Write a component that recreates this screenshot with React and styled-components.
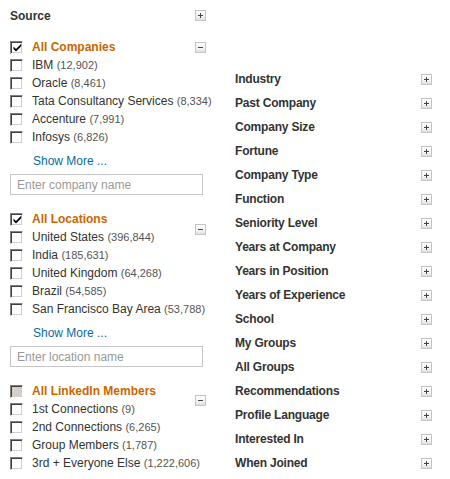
import styled, { createGlobalStyle } from 'styled-components';

const GlobalStyle = createGlobalStyle`
  body {
    margin: 0;
    background: #fff;
    font-family: "Liberation Sans", Arial, sans-serif;
    color: #333;
  }
`;

const groups = [
  {
    title: 'All Companies',
    drop: 4,
    options: [
      ['IBM', '12,902'],
      ['Oracle', '8,461'],
      ['Tata Consultancy Services', '8,334'],
      ['Accenture', '7,991'],
      ['Infosys', '6,826'],
    ],
    placeholder: 'Enter company name',
  },
  {
    title: 'All Locations',
    drop: 14,
    options: [
      ['United States', '396,844'],
      ['India', '185,631'],
      ['United Kingdom', '64,268'],
      ['Brazil', '54,585'],
      ['San Francisco Bay Area', '53,788'],
    ],
    placeholder: 'Enter location name',
  },
  {
    title: 'All LinkedIn Members',
    drop: 13,
    disabled: true,
    options: [
      ['1st Connections', '9'],
      ['2nd Connections', '6,265'],
      ['Group Members', '1,787'],
      ['3rd + Everyone Else', '1,222,606'],
    ],
  },
];

const facets = [
  'Industry',
  'Past Company',
  'Company Size',
  'Fortune',
  'Company Type',
  'Function',
  'Seniority Level',
  'Years at Company',
  'Years in Position',
  'Years of Experience',
  'School',
  'My Groups',
  'All Groups',
  'Recommendations',
  'Profile Language',
  'Interested In',
  'When Joined',
];

function Toggle({ open, drop }) {
  return (
    <ToggleBox $drop={drop}>
      <svg width="11" height="11" viewBox="0 0 11 11">
        <defs>
          <linearGradient id="tg" x1="0" y1="0" x2="0" y2="1">
            <stop offset="0" stopColor="#ffffff" />
            <stop offset="0.6" stopColor="#f4f4f4" />
            <stop offset="1" stopColor="#dcdcdc" />
          </linearGradient>
        </defs>
        <rect x="0.5" y="0.5" width="10" height="10" fill="url(#tg)" stroke="#c4c4c4" />
        <path d="M3 5.5h5" stroke="#444" strokeWidth="1" />
        {!open && <path d="M5.5 3v5" stroke="#444" strokeWidth="1" />}
      </svg>
    </ToggleBox>
  );
}

function CheckBox({ checked, disabled }) {
  return (
    <Box $disabled={disabled}>
      {checked && (
        <svg width="9" height="9" viewBox="0 0 9 9">
          <path d="M0.5 3.6l2.5 2.4L8.2 0.8v2.4L3 8.4 0.5 6z" fill="#000" />
        </svg>
      )}
    </Box>
  );
}

export default function App() {
  return (
    <>
      <GlobalStyle />
      <Page>
        <LeftColumn>
          <SourceHead>
            <span>Source</span>
            <Toggle drop={3} />
          </SourceHead>
          {groups.map((group, i) => (
            <FilterGroup key={group.title} $first={i === 0}>
              <GroupHead>
                <OptionLabel>
                  <CheckBox checked={!group.disabled} disabled={group.disabled} />
                  <GroupTitle>{group.title}</GroupTitle>
                </OptionLabel>
                <Toggle open drop={group.drop} />
              </GroupHead>
              {group.options.map(([name, count]) => (
                <OptionLabel key={name}>
                  <CheckBox />
                  <OptionName>
                    {name} <Count>({count})</Count>
                  </OptionName>
                </OptionLabel>
              ))}
              {group.placeholder && (
                <>
                  <ShowMore href="#">Show More ...</ShowMore>
                  <SearchInput placeholder={group.placeholder} />
                </>
              )}
            </FilterGroup>
          ))}
        </LeftColumn>
        <RightColumn>
          {facets.map((facet) => (
            <FacetRow key={facet}>
              <FacetTitle>{facet}</FacetTitle>
              <Toggle drop={0} />
            </FacetRow>
          ))}
        </RightColumn>
      </Page>
    </>
  );
}

const Page = styled.div`
  display: grid;
  grid-template-columns: 196px 197px;
  column-gap: 29px;
  padding: 7px 0 0 10px;
  align-items: start;
`;

const LeftColumn = styled.div`
  display: flex;
  flex-direction: column;
`;

const SourceHead = styled.div`
  display: flex;
  justify-content: space-between;
  align-items: flex-start;
  height: 18px;
  line-height: 18px;
  font-size: 12px;
  font-weight: bold;
  color: #333;
`;

const ToggleBox = styled.span`
  display: block;
  width: 11px;
  height: 11px;
  margin-top: ${(p) => p.$drop}px;
  flex-shrink: 0;

  svg {
    display: block;
  }
`;

const FilterGroup = styled.div`
  display: flex;
  flex-direction: column;
  margin-top: ${(p) => (p.$first ? 13 : 15)}px;
`;

const GroupHead = styled.div`
  display: flex;
  justify-content: space-between;
  align-items: flex-start;
  height: 18px;
`;

const OptionLabel = styled.label`
  display: flex;
  align-items: center;
  height: 18px;
  gap: 9px;
  white-space: nowrap;
`;

const Box = styled.span`
  box-sizing: border-box;
  width: 13px;
  height: 13px;
  display: flex;
  align-items: center;
  justify-content: center;
  background: ${(p) => (p.$disabled ? '#d4d0c8' : '#fff')};
  border: 1px solid;
  border-color: #808080 #ffffff #ffffff #808080;
  box-shadow: inset 1px 1px #404040, inset -1px -1px #d4d0c8;
  flex-shrink: 0;

  svg {
    display: block;
    margin: 1px 0 0 1px;
  }
`;

const GroupTitle = styled.span`
  font-size: 12px;
  font-weight: bold;
  color: #cc6600;
`;

const OptionName = styled.span`
  font-size: 12px;
  color: #333;
`;

const Count = styled.span`
  font-size: 11px;
  color: #555;
`;

const ShowMore = styled.a`
  display: block;
  margin-top: 6px;
  padding-left: 23px;
  line-height: 18px;
  font-size: 12px;
  color: #0a6aa1;
  text-decoration: none;
`;

const SearchInput = styled.input`
  box-sizing: border-box;
  margin-top: 4px;
  width: 193px;
  height: 21px;
  border: 1px solid #c6c6c6;
  padding: 0 6px;
  font-family: "Liberation Sans", Arial, sans-serif;
  font-size: 12px;
  color: #333;
  outline: none;

  &::placeholder {
    color: #999;
  }
`;

const RightColumn = styled.div`
  display: flex;
  flex-direction: column;
  padding-top: 60px;
`;

const FacetRow = styled.div`
  display: flex;
  justify-content: space-between;
  align-items: center;
  height: 24px;
`;

const FacetTitle = styled.span`
  font-size: 12px;
  font-weight: bold;
  color: #333;
  letter-spacing: -0.2px;
`;
